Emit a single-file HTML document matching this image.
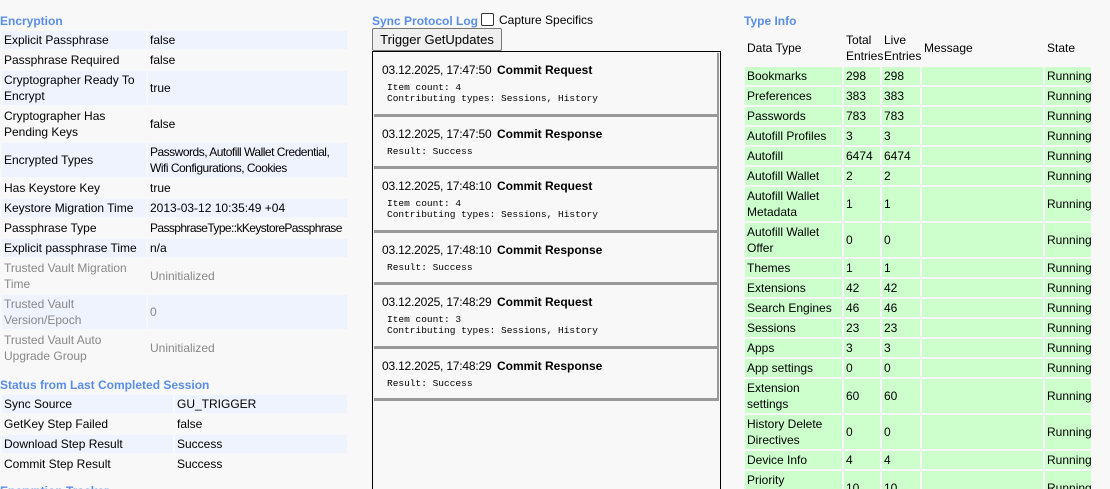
<!DOCTYPE html>
<html><head><meta charset="utf-8"><style>
*{margin:0;padding:0;box-sizing:border-box}
html,body{width:1110px;height:489px;overflow:hidden}
body{background:#f8f8f8;font-family:"Liberation Sans",sans-serif;font-size:12px;color:#000;position:relative}
.h{position:absolute;font-weight:bold;color:#5a8ee6;font-size:12px;line-height:14px}
table{position:absolute;border-collapse:separate;border-spacing:2px;table-layout:fixed}
td{padding:1px 2px;line-height:16px;vertical-align:middle;overflow:hidden;white-space:nowrap}
.s td{background:#eef3fe}
.g td{color:#888}
.t td{background:#ccffcc}
.t tr.hd td{background:none}
.log{position:absolute;left:372px;top:51px;width:349px;height:450px;border:1px solid #000;background:#f8f8f8}
.e{position:absolute;left:1px;width:345px;border-right:2px solid #999;border-bottom:3px solid #999;background:#f8f8f8}
.e .l{position:absolute;left:8px;top:9px;font-size:12px;line-height:16px;white-space:nowrap;letter-spacing:-0.2px}
.e b{position:absolute;left:123px;top:9px;font-size:12px;line-height:16px;white-space:nowrap}
.e pre{position:absolute;left:13px;font-family:"Liberation Mono",monospace;font-size:9.5px;line-height:11px}
</style></head><body>
<div class="h" style="left:0;top:14px">Encryption</div>
<table style="left:0;top:29px;width:349px">
<col style="width:144px"><col style="width:199px">
<tr class="s"><td>Explicit Passphrase</td><td>false</td></tr>
<tr><td>Passphrase Required</td><td>false</td></tr>
<tr class="s"><td>Cryptographer Ready To<br>Encrypt</td><td>true</td></tr>
<tr><td>Cryptographer Has<br>Pending Keys</td><td>false</td></tr>
<tr class="s"><td>Encrypted Types</td><td style="letter-spacing:-0.5px">Passwords, Autofill Wallet Credential,<br>Wifi Configurations, Cookies</td></tr>
<tr><td>Has Keystore Key</td><td>true</td></tr>
<tr class="s"><td>Keystore Migration Time</td><td>2013-03-12 10:35:49 +04</td></tr>
<tr><td>Passphrase Type</td><td style="letter-spacing:-0.6px">PassphraseType::kKeystorePassphrase</td></tr>
<tr class="s"><td>Explicit passphrase Time</td><td>n/a</td></tr>
<tr class="g"><td>Trusted Vault Migration<br>Time</td><td>Uninitialized</td></tr>
<tr class="s g"><td>Trusted Vault<br>Version/Epoch</td><td>0</td></tr>
<tr class="g"><td>Trusted Vault Auto<br>Upgrade Group</td><td>Uninitialized</td></tr>
</table>
<div class="h" style="left:0;top:378px">Status from Last Completed Session</div>
<table style="left:0;top:393px;width:349px">
<col style="width:171px"><col style="width:172px">
<tr class="s"><td>Sync Source</td><td>GU_TRIGGER</td></tr>
<tr><td>GetKey Step Failed</td><td>false</td></tr>
<tr class="s"><td>Download Step Result</td><td>Success</td></tr>
<tr><td>Commit Step Result</td><td>Success</td></tr>
</table>
<div class="h" style="left:0;top:484px">Encryption Tracker</div>

<div class="h" style="left:372px;top:14px">Sync Protocol Log</div>
<div style="position:absolute;left:481px;top:13px;width:13px;height:13px;border:1px solid #333;border-radius:2px;background:#fff"></div>
<div style="position:absolute;left:499px;top:13px;line-height:14px">Capture Specifics</div>
<div style="position:absolute;left:372px;top:28px;width:130px;height:23px;border:1px solid #777;background:#efefef;border-radius:2px;text-align:center;line-height:21px;font-size:13px">Trigger GetUpdates</div>
<div class="log">
<div class="e" style="top:1px;height:64px"><div class="l">03.12.2025, 17:47:50</div><b>Commit Request</b><pre style="top:29px">Item count: 4
Contributing types: Sessions, History</pre></div>
<div class="e" style="top:65px;height:52px"><div class="l">03.12.2025, 17:47:50</div><b>Commit Response</b><pre style="top:29px">Result: Success</pre></div>
<div class="e" style="top:117px;height:64px"><div class="l">03.12.2025, 17:48:10</div><b>Commit Request</b><pre style="top:29px">Item count: 4
Contributing types: Sessions, History</pre></div>
<div class="e" style="top:181px;height:52px"><div class="l">03.12.2025, 17:48:10</div><b>Commit Response</b><pre style="top:29px">Result: Success</pre></div>
<div class="e" style="top:233px;height:64px"><div class="l">03.12.2025, 17:48:29</div><b>Commit Request</b><pre style="top:29px">Item count: 3
Contributing types: Sessions, History</pre></div>
<div class="e" style="top:297px;height:52px"><div class="l">03.12.2025, 17:48:29</div><b>Commit Response</b><pre style="top:29px">Result: Success</pre></div>
</div>

<div class="h" style="left:744px;top:14px">Type Info</div>
<table class="t" style="left:743px;top:29px;width:350px">
<col style="width:97px"><col style="width:36px"><col style="width:38px"><col style="width:121px"><col style="width:46px">
<tr class="hd"><td>Data Type</td><td style="overflow:visible">Total<br>Entries</td><td style="overflow:visible">Live<br>Entries</td><td>Message</td><td>State</td></tr>
<tr><td>Bookmarks</td><td>298</td><td>298</td><td></td><td>Running</td></tr>
<tr><td>Preferences</td><td>383</td><td>383</td><td></td><td>Running</td></tr>
<tr><td>Passwords</td><td>783</td><td>783</td><td></td><td>Running</td></tr>
<tr><td>Autofill Profiles</td><td>3</td><td>3</td><td></td><td>Running</td></tr>
<tr><td>Autofill</td><td>6474</td><td>6474</td><td></td><td>Running</td></tr>
<tr><td>Autofill Wallet</td><td>2</td><td>2</td><td></td><td>Running</td></tr>
<tr><td>Autofill Wallet<br>Metadata</td><td>1</td><td>1</td><td></td><td>Running</td></tr>
<tr><td>Autofill Wallet<br>Offer</td><td>0</td><td>0</td><td></td><td>Running</td></tr>
<tr><td>Themes</td><td>1</td><td>1</td><td></td><td>Running</td></tr>
<tr><td>Extensions</td><td>42</td><td>42</td><td></td><td>Running</td></tr>
<tr><td>Search Engines</td><td>46</td><td>46</td><td></td><td>Running</td></tr>
<tr><td>Sessions</td><td>23</td><td>23</td><td></td><td>Running</td></tr>
<tr><td>Apps</td><td>3</td><td>3</td><td></td><td>Running</td></tr>
<tr><td>App settings</td><td>0</td><td>0</td><td></td><td>Running</td></tr>
<tr><td>Extension<br>settings</td><td>60</td><td>60</td><td></td><td>Running</td></tr>
<tr><td>History Delete<br>Directives</td><td>0</td><td>0</td><td></td><td>Running</td></tr>
<tr><td>Device Info</td><td>4</td><td>4</td><td></td><td>Running</td></tr>
<tr><td>Priority<br>Preferences</td><td>10</td><td>10</td><td></td><td>Running</td></tr>
</table>
</body></html>
